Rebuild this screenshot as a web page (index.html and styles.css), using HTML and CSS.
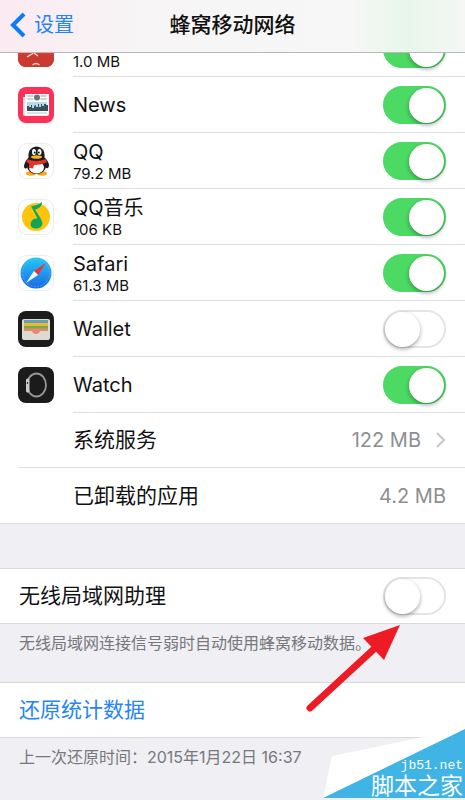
FILE: index.html
```html
<!DOCTYPE html>
<html lang="zh-CN">
<head>
  <meta charset="UTF-8" />
  <meta name="viewport" content="width=device-width, initial-scale=1.0"/>
  <title>蜂窝移动网络</title>
  <link rel="stylesheet" href="styles.css">
</head>
<body>
  <header class="navbar">
    <a class="back" href="#">
      <svg width="16" height="26" viewBox="0 0 16 26"><path d="M14 2 3 13l11 11" fill="none" stroke="#0a7aff" stroke-width="4"/></svg>
      <span>设置</span>
    </a>
    <h1>蜂窝移动网络</h1>
  </header>

  <main>
    <ul class="list apps">
      <li class="row">
        <svg class="icon" viewBox="0 0 36 36">
          <rect width="36" height="36" rx="8" fill="#d63c30"/>
          <path d="M0 24h36v4a8 8 0 0 1-8 8H8a8 8 0 0 1-8-8z" fill="#c93a31"/>
          <path d="M9 26l5-3 5-6M16 22l4 3M14.500 34q3.500-3 7 0" fill="none" stroke="#f5d9cf" stroke-width="1.300"/>
        </svg>
        <label class="cell">
          <span class="text"><span class="name">Maps</span><span class="size">1.0 MB</span></span>
          <input class="switch" type="checkbox" checked>
        </label>
      </li>
      <li class="row">
        <svg class="icon" viewBox="0 0 36 36">
          <rect width="36" height="36" rx="8" fill="#fc3158"/>
          <path d="M5 10h4v19H7q-2 0-2-2z" fill="#e4e6e6"/>
          <path d="M7 7h24v20q0 2-2 2H7z" fill="#fafafa"/>
          <path d="M9.500 9h6M9.500 12h6M22.500 9h6M22.500 12h6" stroke="#a5a9ac" stroke-width="1"/>
          <circle cx="19" cy="10.500" r="3" fill="#6d7479"/>
          <path d="M9 15h20v9H9z" fill="#b3dcec"/>
          <path d="M9 19h2v1h2v-2h1v3h2v-2l2-1v2h2v-3h1v3h2v-3h1v2h2v-2h2v1h2v6H9z" fill="#37505c"/>
          <path d="M9 26h20" stroke="#c3c6c8" stroke-width="1"/>
        </svg>
        <label class="cell">
          <span class="text"><span class="name">News</span></span>
          <input class="switch" type="checkbox" checked>
        </label>
      </li>
      <li class="row">
        <svg class="icon" viewBox="0 0 36 36">
          <rect x=".5" y=".5" width="35" height="35" rx="8" fill="#fff" stroke="#ececee"/>
          <ellipse cx="13" cy="30.500" rx="5" ry="2.200" fill="#f7a914"/>
          <ellipse cx="24" cy="30.500" rx="5" ry="2.200" fill="#f7a914"/>
          <path d="M11 14q-5 5-5 10 1 3 4 0l17 0q3 3 4-1 0-5-5-9z" fill="#1c1d20"/>
          <ellipse cx="18.500" cy="23" rx="9.500" ry="8" fill="#1c1d20"/>
          <ellipse cx="18.500" cy="24.500" rx="7.500" ry="6" fill="#fff"/>
          <path d="M10.500 14C9 0 28 0 26.500 14q-2 4-8 4t-8-4z" fill="#1c1d20"/>
          <ellipse cx="16" cy="9" rx="2" ry="3" fill="#fff"/>
          <ellipse cx="21.500" cy="9" rx="2" ry="3" fill="#fff"/>
          <circle cx="16.700" cy="9.500" r="1" fill="#111"/>
          <circle cx="20.800" cy="9.500" r="1" fill="#111"/>
          <path d="M9 16q9.500 4 19 0l1 3q-5 3-13 3l-1 3.500-4-.5.500-4-3-2z" fill="#e83229"/>
          <ellipse cx="18.500" cy="14" rx="5.500" ry="1.800" fill="#f9b615"/>
        </svg>
        <label class="cell">
          <span class="text"><span class="name">QQ</span><span class="size">79.2 MB</span></span>
          <input class="switch" type="checkbox" checked>
        </label>
      </li>
      <li class="row">
        <svg class="icon" viewBox="0 0 36 36">
          <rect x=".5" y=".5" width="35" height="35" rx="8" fill="#fff" stroke="#ececee"/>
          <circle cx="18" cy="18" r="14" fill="#fdc40e"/>
          <path d="M13 7q6 0 11-4 0 6-7 7.500l6 9.500q4 8-3.500 9.500-7 .5-7-4.500 1-6 7-5.500z" fill="#0ba657"/>
        </svg>
        <label class="cell">
          <span class="text"><span class="name">QQ音乐</span><span class="size">106 KB</span></span>
          <input class="switch" type="checkbox" checked>
        </label>
      </li>
      <li class="row">
        <svg class="icon" viewBox="0 0 36 36">
          <defs><linearGradient id="safari" x2="0" y2="1"><stop stop-color="#24c8f7"/><stop offset="1" stop-color="#1b68e3"/></linearGradient></defs>
          <rect x=".5" y=".5" width="35" height="35" rx="8" fill="#fff" stroke="#ececee"/>
          <circle cx="18" cy="18" r="15.500" fill="url(#safari)"/>
          <circle cx="18" cy="18" r="13.500" fill="none" stroke="#75cbfa" stroke-width="1" stroke-dasharray=".5 1"/>
          <path d="M28 8 16 16l4 4z" fill="#f2323a"/>
          <path d="M8 28 16 16l4 4z" fill="#f5f8fb"/>
        </svg>
        <label class="cell">
          <span class="text"><span class="name">Safari</span><span class="size">61.3 MB</span></span>
          <input class="switch" type="checkbox" checked>
        </label>
      </li>
      <li class="row">
        <svg class="icon" viewBox="0 0 36 36">
          <rect width="36" height="36" rx="8" fill="#1d1c1c"/>
          <rect x="4" y="8" width="28" height="21" rx="2" fill="#dddbd1"/>
          <path d="M6 9h24v3H6z" fill="#5f9fb9"/>
          <path d="M6 12h24v3H6z" fill="#efb72c"/>
          <path d="M6 15h24v3H6z" fill="#75ae48"/>
          <path d="M6 17.500h24V20h-8q-1 3-4 3t-4-3H6z" fill="#e98572"/>
        </svg>
        <label class="cell">
          <span class="text"><span class="name">Wallet</span></span>
          <input class="switch" type="checkbox">
        </label>
      </li>
      <li class="row">
        <svg class="icon" viewBox="0 0 36 36">
          <rect width="36" height="36" rx="8" fill="#1b1b1c"/>
          <ellipse cx="18.500" cy="18" rx="9.500" ry="11.500" fill="none" stroke="#969698" stroke-width="1.800"/>
          <rect x="8" y="11.500" width="3.500" height="14" rx="1.500" fill="#c9c9cb"/>
          <path d="M9.500 15v2" stroke="#333" stroke-width="1.200"/>
        </svg>
        <label class="cell">
          <span class="text"><span class="name">Watch</span></span>
          <input class="switch" type="checkbox" checked>
        </label>
      </li>
      <li class="row plain">
        <a class="cell" href="#">
          <span class="name">系统服务</span>
          <span class="value">122 MB</span>
          <svg class="chevron" width="10" height="16" viewBox="0 0 10 16"><path d="M1 1l7 7-7 7" fill="none" stroke="#c7c7cc" stroke-width="2"/></svg>
        </a>
      </li>
      <li class="row plain">
        <div class="cell">
          <span class="name">已卸载的应用</span>
          <span class="value">4.2 MB</span>
        </div>
      </li>
    </ul>

    <section class="group assist">
      <label class="panel">
        <span class="name">无线局域网助理</span>
        <input class="switch" type="checkbox">
      </label>
      <p class="note">无线局域网连接信号弱时自动使用蜂窝移动数据。</p>
      <svg class="arrow" width="98" height="90" viewBox="0 0 98 90">
        <path d="M6 84 70 25" stroke="#ed1c24" stroke-width="7" stroke-linecap="round"/>
        <path d="M96 1 59 14l21 22z" fill="#ed1c24"/>
      </svg>
    </section>

    <section class="group">
      <button class="panel reset" type="button">还原统计数据</button>
      <p class="note">上一次还原时间：2015年1月22日 16:37</p>
    </section>
  </main>

  <div class="watermark">
    <svg class="corner" width="142" height="70" viewBox="0 0 142 70">
      <path d="M9 27 110 6 142 0v9L0 69z" fill="#fff"/>
      <path d="M142 0v69H0z" fill="#40b4e5"/>
    </svg>
    <span class="site">jb51.net</span>
    <span class="brand">脚本之家</span>
  </div>
</body>
</html>
```
FILE: styles.css
```css
* {
  box-sizing: border-box;
}

body {
  margin: 0;
  min-height: 100vh;
  position: relative;
  overflow: hidden;
  background: #efeff4;
  color: #111;
  font-family: Inter, "Noto Sans CJK SC", sans-serif;
  font-size: 20px;
  line-height: 24px;
}

.navbar {
  position: sticky;
  top: 0;
  z-index: 2;
  display: grid;
  grid-template-columns: 1fr auto 1fr;
  align-items: center;
  height: 53px;
  padding: 0 10px 2px;
  border-bottom: 1px solid #b8b8ba;
  background: linear-gradient(to right, #fbeaf1, #f7f5f6 30%, #f7f7f7 75%, #e8f6ea 88%, #f4f7f4);
}

.navbar h1 {
  margin: 0;
  font-size: 21px;
  font-weight: 500;
}

.back {
  display: flex;
  align-items: center;
  gap: 8px;
  color: #2584f8;
  text-decoration: none;
}

/* the list is scrolled partly under the bar */
.list {
  margin: -32px 0 0;
  padding: 0;
  list-style: none;
  background: #fff;
}

.row {
  display: flex;
  align-items: center;
  gap: 19px;
  height: 56px;
  padding-left: 18px;
}

.icon {
  flex: none;
  width: 36px;
  height: 36px;
}

.cell {
  flex: 1;
  display: flex;
  align-items: center;
  justify-content: space-between;
  height: 100%;
  padding-right: 19px;
  border-bottom: 1px solid #dfdfe2;
  color: inherit;
  text-decoration: none;
}

.text {
  display: flex;
  flex-direction: column;
}

.name {
  font-size: 21px;
}

.text .name {
  font-size: 20px;
  line-height: 26px;
}

.size {
  font-size: 15px;
  line-height: 18px;
}

.plain {
  height: 55px;
}

.plain .cell {
  padding-left: 55px;
}

.plain:last-child {
  height: 56px;
  padding-left: 0;
}

.plain:last-child .cell {
  padding-left: 73px;
}

.value {
  margin-left: auto;
  color: #8e8e93;
}

.chevron {
  margin-left: 15px;
}

.switch {
  appearance: none;
  flex: none;
  width: 63px;
  height: 38px;
  margin: 0;
  border: 2px solid #e5e5e5;
  border-radius: 19px;
  background: #fff;
}

.switch::before {
  content: "";
  display: block;
  width: 35px;
  height: 35px;
  border-radius: 50%;
  background: #fff;
  box-shadow: 0 2px 4px rgba(0, 0, 0, 0.35);
}

.switch:checked {
  border-color: #4cd964;
  background: #4cd964;
}

.switch:checked::before {
  margin-left: auto;
}

.group {
  position: relative;
}

.assist {
  margin-top: 44px;
}

.panel {
  display: flex;
  align-items: center;
  justify-content: space-between;
  width: 100%;
  height: 56px;
  padding: 0 19px;
  border: 0;
  border-top: 1px solid #d9d9dc;
  border-bottom: 1px solid #d9d9dc;
  background: #fff;
}

.reset {
  color: #2584f8;
  font-family: inherit;
  font-size: 21px;
  line-height: 24px;
}

.note {
  margin: 0;
  padding: 8px 19px 27px;
  color: #77777c;
  font-size: 16px;
  line-height: 23px;
}

.arrow {
  position: absolute;
  top: 56px;
  right: 63px;
  z-index: 1;
}

.watermark {
  position: absolute;
  right: 0;
  bottom: 1px;
  z-index: 1;
  display: flex;
  flex-direction: column;
  align-items: flex-end;
  padding: 0 2px 3px 0;
  color: #fff;
}

.corner {
  position: absolute;
  right: 0;
  bottom: 0;
  z-index: -1;
}

.site {
  font-family: "Liberation Mono", monospace;
  font-size: 13px;
  line-height: 12px;
}

.brand {
  font-family: "Noto Sans CJK SC", sans-serif;
  font-size: 23px;
  line-height: 24px;
}
```
